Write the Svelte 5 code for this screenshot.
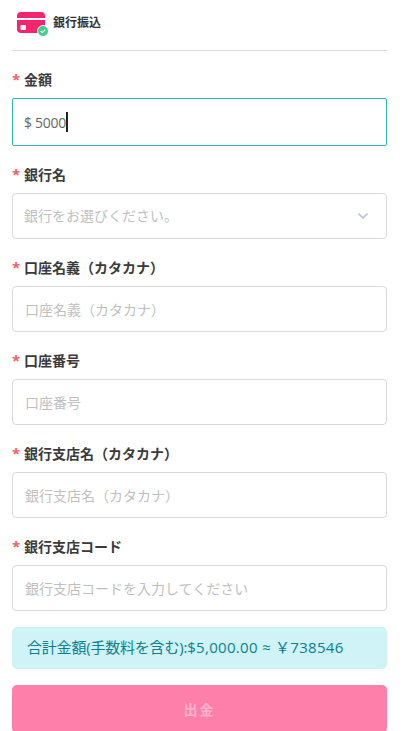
<script>
	// Bank transfer withdrawal form
	let amount = $state('$ 5000');
	const fields = [
		{ label: '口座名義（カタカナ）', placeholder: '口座名義（カタカナ）' },
		{ label: '口座番号', placeholder: '口座番号' },
		{ label: '銀行支店名（カタカナ）', placeholder: '銀行支店名（カタカナ）' },
		{ label: '銀行支店コード', placeholder: '銀行支店コードを入力してください' }
	];
</script>

<div class="page">
	<div class="header">
		<svg class="card-icon" width="32" height="26" viewBox="0 0 32 26">
			<path d="M1 5a4 4 0 0 1 4-4h20a4 4 0 0 1 4 4v2H1z" fill="#f5256d" />
			<path d="M1 9h28v9a4 4 0 0 1-4 4H5a4 4 0 0 1-4-4z" fill="#f5256d" />
			<rect x="4.500" y="14" width="5.500" height="5" rx="1" fill="#fff" />
			<circle cx="27" cy="20" r="5.500" fill="#3ecf8a" stroke="#fff" stroke-width="1" />
			<path d="M24.700 20l1.700 1.700 2.900-3" fill="none" stroke="#fff" stroke-width="1.200" />
		</svg>
		<span class="title">銀行振込</span>
	</div>

	<div class="field">
		<div class="label"><span class="star">*</span>金額</div>
		<div class="control focused"><span class="value">{amount}</span><span class="caret"></span></div>
	</div>

	<div class="field">
		<div class="label"><span class="star">*</span>銀行名</div>
		<div class="control select">
			<span class="placeholder">銀行をお選びください。</span>
			<svg class="chevron" width="12" height="8" viewBox="0 0 12 8">
				<path d="M1.500 1.500L6 6l4.500-4.500" fill="none" stroke="#c5cbd6" stroke-width="1.800" />
			</svg>
		</div>
	</div>

	{#each fields as f}
		<div class="field">
			<div class="label"><span class="star">*</span>{f.label}</div>
			<div class="control"><span class="placeholder">{f.placeholder}</span></div>
		</div>
	{/each}

	<div class="total"><span class="fee">合計金額(手数料を含む):</span><span class="sum">$5,000.00 ≈ ￥738546</span></div>
	<button class="submit" disabled>出金</button>
</div>

<style>
	:global(body) {
		background: #fff;
		overflow: hidden;
	}

	.page {
		height: 731px;
		overflow: hidden;
		box-sizing: border-box;
		width: 399px;
		padding: 0 12px;
		font-family: "Open Sans", "Noto Sans CJK JP", sans-serif;
		color: #333;
	}

	.header {
		display: flex;
		align-items: center;
		gap: 5px;
		height: 51px;
		padding-left: 4px;
		box-sizing: border-box;
		border-bottom: 1px solid #dcdcdc;
	}

	.title {
		font-size: 12px;
		font-weight: 700;
		margin-top: -6px;
	}

	.card-icon {
		margin-top: -3px;
	}

	.field {
		margin-top: 18px;
	}

	.field:first-of-type {
		margin-top: 19px;
	}

	.label {
		font-size: 14px;
		font-weight: 700;
		line-height: 21px;
		height: 29px;
		color: #3a3a3a;
	}

	.star {
		display: inline-block;
		width: 8px;
		margin-right: 4px;
		color: #f0606a;
		font-size: 15px;
		font-weight: 700;
	}

	.control {
		display: flex;
		align-items: center;
		box-sizing: border-box;
		height: 46px;
		padding: 0 12px;
		border: 1px solid #d9d9d9;
		border-radius: 4px;
		font-size: 14px;
	}

	.focused {
		height: 48px;
		padding-left: 11px;
		border-color: #2fb8bd;
		border-radius: 2px;
	}

	.select {
		justify-content: space-between;
		padding-left: 11px;
		padding-right: 17px;
	}

	.select .placeholder {
		margin-top: -2px;
	}

	.value {
		color: #666;
		letter-spacing: -0.3px;
	}

	.caret {
		width: 2px;
		height: 20px;
		background: #222;
	}

	.placeholder {
		color: #bfbfbf;
	}

	.total {
		margin-top: 16px;
		height: 42px;
		line-height: 41px;
		padding: 0 15px;
		font-size: 15px;
		color: #0b7f8f;
		background: #cff3f7;
		border-radius: 5px;
	}

	.fee {
		letter-spacing: -0.2px;
	}

	.sum {
		letter-spacing: 0.3px;
	}

	.submit {
		display: block;
		width: 100%;
		height: 48px;
		margin-top: 16px;
		border: 0;
		border-radius: 5px;
		background: #ff7fab;
		color: #ffb3cd;
		font-family: inherit;
		font-size: 14px;
		font-weight: 700;
		letter-spacing: 2px;
	}
</style>
